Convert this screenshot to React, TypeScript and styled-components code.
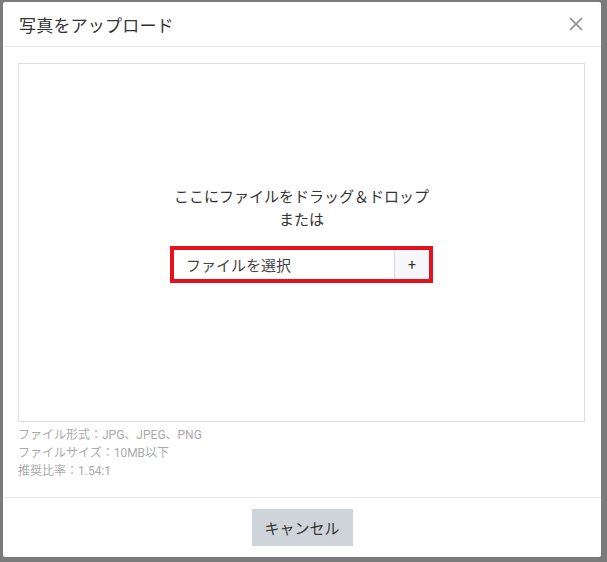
import React from "react";
import styled, { createGlobalStyle } from "styled-components";

const Global = createGlobalStyle`
  html, body { margin: 0; padding: 0; background: #7b7b7b; }
  body { font-family: Roboto, "Noto Sans CJK JP", sans-serif; }
  * { box-sizing: border-box; }
`;

const Backdrop = styled.div`
  width: 607px;
  height: 562px;
  padding: 2px 6px 5px 3px;
  background: #7b7b7b;
  display: flex;
`;

const Modal = styled.div`
  flex: 1;
  background: #fff;
  display: flex;
  flex-direction: column;
  border-radius: 2px;
`;

const Header = styled.div`
  height: 45px;
  border-bottom: 1px solid #e9e9e9;
  display: flex;
  align-items: center;
  justify-content: space-between;
  padding: 0 17px 0 16px;
`;

const Title = styled.h2`
  margin: 0;
  font-size: 17px;
  font-weight: 400;
  color: #333;
  letter-spacing: 0.2px;
`;

const Close = styled.button`
  border: 0;
  background: none;
  padding: 0;
  width: 16px;
  height: 16px;
  display: flex;
  cursor: pointer;
`;

const Body = styled.div`
  flex: 1;
  padding: 16px 16px 0 15px;
  display: flex;
  flex-direction: column;
`;

const DropZone = styled.div`
  height: 359px;
  border: 1px solid #dedede;
  display: flex;
  flex-direction: column;
  align-items: center;
  justify-content: center;
  padding-bottom: 16px;
`;

const DropText = styled.p`
  margin: 0;
  font-size: 15px;
  line-height: 23px;
  color: #333;
  text-align: center;
`;

const Picker = styled.div`
  margin-top: 14px;
  width: 263px;
  height: 37px;
  border: 4px solid #e4111f;
  display: flex;
`;

const PickerLabel = styled.div`
  flex: 1;
  display: flex;
  align-items: center;
  padding-left: 12px;
  font-size: 15px;
  color: #444;
  background: #fff;
`;

const PickerButton = styled.div`
  width: 35px;
  border-left: 1px solid #dcdcdc;
  background: #f6f7f8;
  display: flex;
  align-items: center;
  justify-content: center;
  font-size: 14px;
  color: #333;
`;

const Info = styled.div`
  padding-top: 4px;
  display: flex;
  flex-direction: column;
`;

const InfoLine = styled.div`
  font-size: 12px;
  line-height: 18px;
  color: #aaa;
`;

const Footer = styled.div`
  height: 60px;
  border-top: 1px solid #e9e9e9;
  display: flex;
  align-items: center;
  justify-content: center;
`;

const CancelButton = styled.button`
  width: 101px;
  height: 37px;
  border: 0;
  background: #cfd3da;
  color: #333;
  font-family: Roboto, "Noto Sans CJK JP", sans-serif;
  font-size: 15px;
  cursor: pointer;
`;

export default function App() {
  return (
    <>
      <Global />
      <Backdrop>
        <Modal>
          <Header>
            <Title>写真をアップロード</Title>
            <Close aria-label="close">
              <svg width="16" height="16" viewBox="0 0 16 16">
                <path d="M2 2 L14 14 M14 2 L2 14" stroke="#888" strokeWidth="1.6" />
              </svg>
            </Close>
          </Header>
          <Body>
            <DropZone>
              <DropText>
                ここにファイルをドラッグ＆ドロップ
                <br />
                または
              </DropText>
              <Picker>
                <PickerLabel>ファイルを選択</PickerLabel>
                <PickerButton>+</PickerButton>
              </Picker>
            </DropZone>
            <Info>
              <InfoLine>ファイル形式：JPG、JPEG、PNG</InfoLine>
              <InfoLine>ファイルサイズ：10MB以下</InfoLine>
              <InfoLine>推奨比率：1.54:1</InfoLine>
            </Info>
          </Body>
          <Footer>
            <CancelButton>キャンセル</CancelButton>
          </Footer>
        </Modal>
      </Backdrop>
    </>
  );
}
